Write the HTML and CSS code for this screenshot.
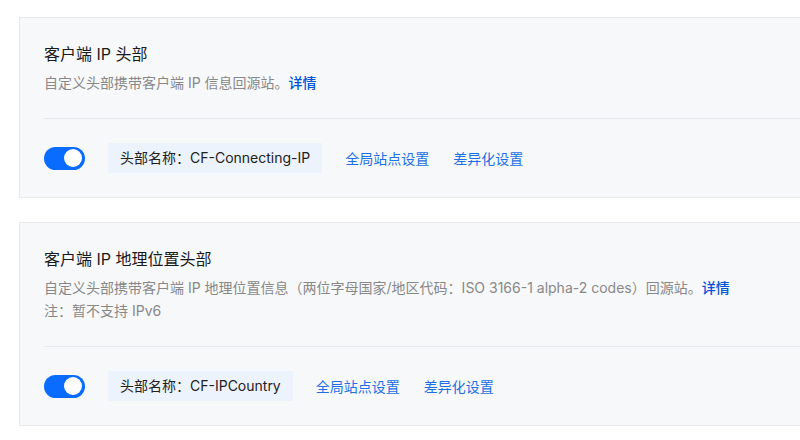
FILE: index.html
```html
<!DOCTYPE html>
<html lang="zh-CN">
<head>
    <meta charset="UTF-8">
    <title>回源请求头</title>
    <link rel="stylesheet" href="styles.css">
</head>
<body>
<div class="list">
    <div class="card">
        <div class="head">
            <div class="title">客户端 IP 头部</div>
            <p class="desc">自定义头部携带客户端 IP 信息回源站。<a class="more" href="#">详情</a></p>
        </div>
        <div class="row">
            <span class="switch on"><span class="knob"></span></span>
            <span class="tag">头部名称：CF-Connecting-IP</span>
            <a class="link" href="#">全局站点设置</a>
            <a class="link" href="#">差异化设置</a>
        </div>
    </div>

    <div class="card">
        <div class="head">
            <div class="title">客户端 IP 地理位置头部</div>
            <p class="desc">自定义头部携带客户端 IP 地理位置信息（两位字母国家/地区代码：ISO 3166-1 alpha-2 codes）回源站。<a class="more" href="#">详情</a></p>
            <p class="desc">注：暂不支持 IPv6</p>
        </div>
        <div class="row">
            <span class="switch on"><span class="knob"></span></span>
            <span class="tag">头部名称：CF-IPCountry</span>
            <a class="link" href="#">全局站点设置</a>
            <a class="link" href="#">差异化设置</a>
        </div>
    </div>
</div>
</body>
</html>
```

FILE: styles.css
```css
body {
    margin: 0;
    background: #fff;
    font-family: "Inter", "Noto Sans CJK SC", sans-serif;
    color: #1a1a1a;
}

.list {
    padding: 17px 0 0 19px;
}

.card {
    background: #f7f8fa;
    border: 1px solid #e6e8eb;
    border-right: none;
    padding-left: 24px;
    margin-bottom: 24px;
}

.head {
    padding: 24px 0 24px;
}

.title {
    font-size: 16px;
    line-height: 24px;
    margin-bottom: 5px;
}

.desc {
    margin: 0;
    font-size: 14px;
    line-height: 23px;
    color: #888;
}

.more {
    color: #0052d9;
    text-decoration: none;
    font-weight: 500;
}

.row {
    display: flex;
    align-items: center;
    border-top: 1px solid #e6e8eb;
    padding: 24px 0 24px;
}

.switch {
    width: 41px;
    height: 23px;
    border-radius: 12px;
    background: #d0d3d9;
    display: flex;
    align-items: center;
    padding: 0 3px;
    box-sizing: border-box;
    margin-right: 23px;
}

.switch.on {
    background: #0a6cff;
    justify-content: flex-end;
}

.knob {
    width: 18px;
    height: 18px;
    border-radius: 50%;
    background: #fff;
}

.tag {
    background: #edf3fc;
    height: 30px;
    line-height: 30px;
    padding: 0 12px;
    font-size: 14px;
    color: #222;
    margin-right: 23px;
}

.link {
    font-size: 14px;
    color: #1d6fe6;
    text-decoration: none;
    margin-right: 24px;
}
```
